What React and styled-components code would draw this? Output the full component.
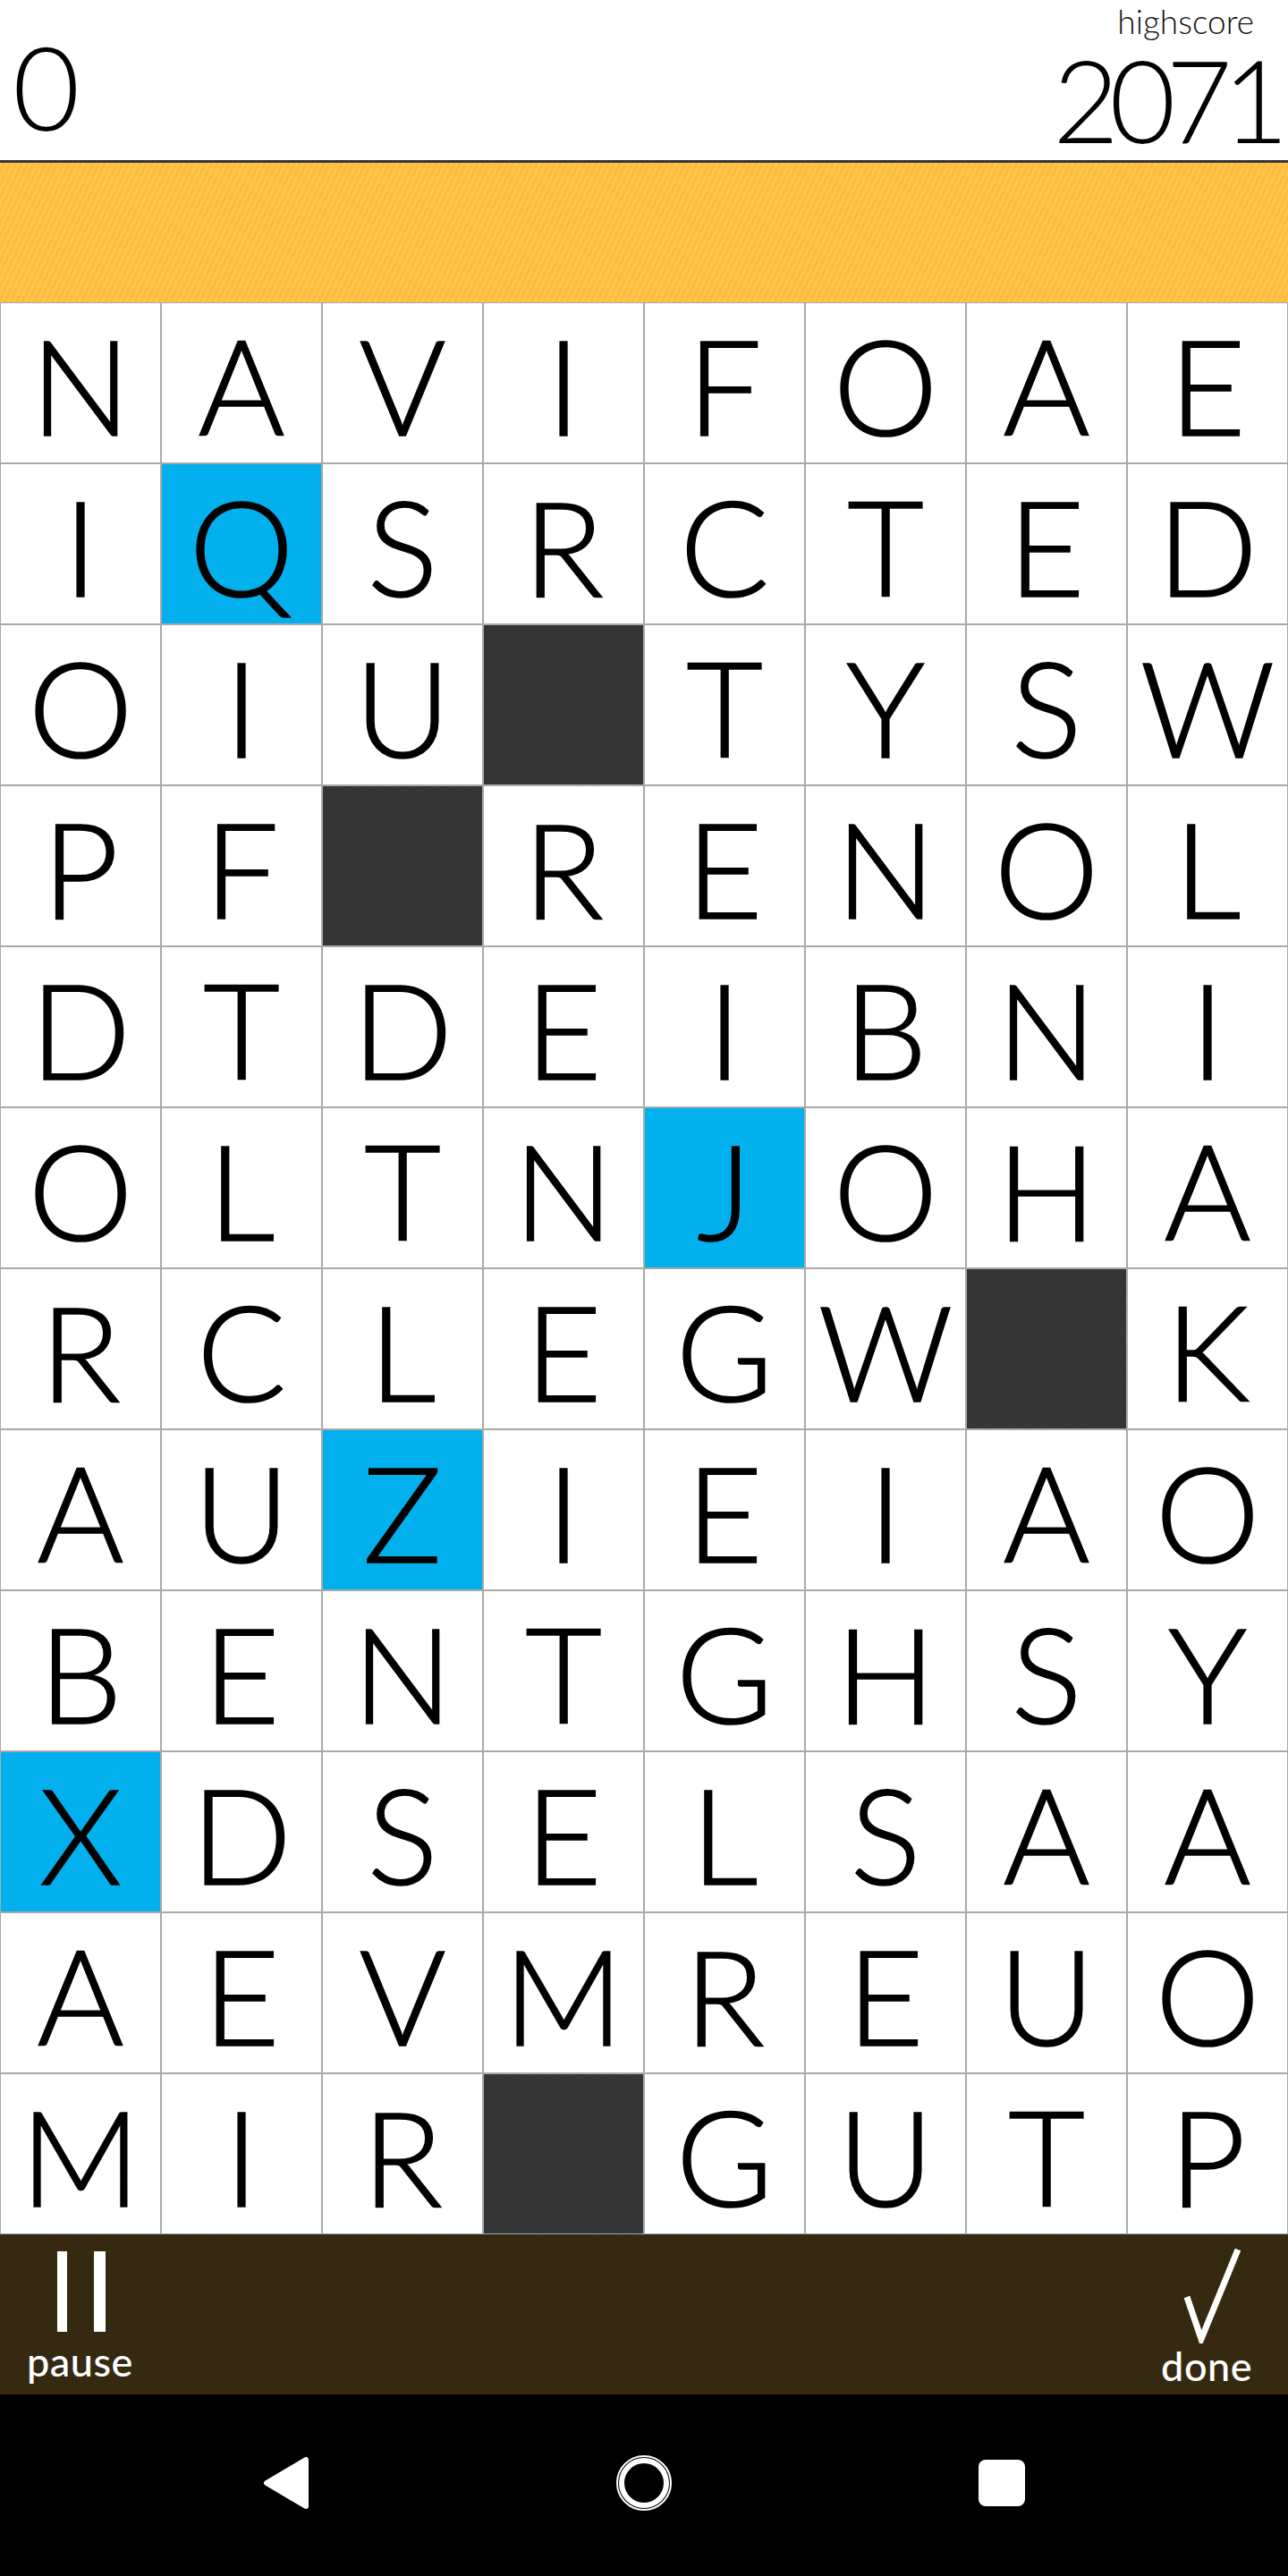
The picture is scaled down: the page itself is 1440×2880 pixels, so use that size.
import React from "react"
import styled, { createGlobalStyle } from "styled-components"

const GlobalStyle = createGlobalStyle`
  html, body {
    margin: 0;
    padding: 0;
    background: #000;
  }
  #root {
    width: 1440px;
  }
`

const BOARD = [
  "NAVIFOAE",
  "IQSRCTED",
  "OIU#TYSW",
  "PF#RENOL",
  "DTDEIBNI",
  "OLTNJOHA",
  "RCLEGW#K",
  "AUZIEIAO",
  "BENTGHSY",
  "XDSELSAA",
  "AEVMREUO",
  "MIR#GUTP",
]

// row-col keys for highlighted tiles
const SELECTED = ["1-1", "5-4", "7-2", "9-0"]

const Screen = styled.div`
  width: 1440px;
  height: 2880px;
  display: flex;
  flex-direction: column;
  background: #fff;
  font-family: Lato, "Open Sans", sans-serif;
`

const Header = styled.header`
  height: 179px;
  flex: none;
  display: flex;
  justify-content: space-between;
  border-bottom: 3px solid #353535;
  background: #fff;
`

const Score = styled.div`
  padding: 31px 0 0 14px;
  font-size: 130px;
  font-weight: 300;
  line-height: 130px;
  color: #000;
`

const HighWrap = styled.div`
  display: flex;
  flex-direction: column;
  align-items: flex-end;
  padding: 5px 10px 0 0;
`

const HighLabel = styled.div`
  font-size: 37px;
  font-weight: 300;
  line-height: 37px;
  color: #111;
  margin-right: 28px;
`

const HighValue = styled.div`
  margin-top: 4px;
  font-size: 128px;
  font-weight: 300;
  line-height: 130px;
  letter-spacing: -11px;
  color: #000;
`

const TimerBar = styled.div`
  height: 156px;
  flex: none;
  background-color: #fec03e;
  background-image: repeating-linear-gradient(
    -65deg,
    rgba(255, 255, 255, 0.07) 0 3px,
    rgba(0, 0, 0, 0.015) 3px 6px
  );
`

const Board = styled.div`
  display: grid;
  grid-template-columns: repeat(8, 180px);
  grid-auto-rows: 180px;
  flex: none;
`

const Tile = styled.div`
  box-sizing: border-box;
  height: 180px;
  border: 1px solid #a9a9a9;
  padding-top: 2px;
  text-align: center;
  font-size: 148px;
  font-weight: 300;
  line-height: 178px;
  color: #000;
  -webkit-text-stroke: 1.6px #000;
  background: ${(p) => (p.$blocked ? "#333333" : p.$selected ? "#02b0ee" : "#fff")};
  ${(p) =>
    p.$blocked &&
    `background-image: repeating-linear-gradient(45deg, rgba(255,255,255,0.025) 0 2px, transparent 2px 4px);`}
`

const ActionBar = styled.div`
  height: 179px;
  flex: none;
  display: flex;
  justify-content: space-between;
  align-items: flex-start;
  padding: 0 40px 0 30px;
  background-color: #372a12;
  background-image: repeating-linear-gradient(
    90deg,
    rgba(0, 0, 0, 0.05) 0 2px,
    transparent 2px 4px
  );
`

const Action = styled.button`
  display: flex;
  flex-direction: column;
  align-items: center;
  padding: 0;
  margin: 0;
  border: none;
  background: none;
  color: #fff;
  font-family: Lato, "Open Sans", sans-serif;
  cursor: pointer;
  svg {
    display: block;
    margin-top: ${(p) => p.$iconTop}px;
    margin-left: ${(p) => p.$iconShift || 0}px;
  }
`

const ActionLabel = styled.span`
  margin-top: ${(p) => p.$gap}px;
  font-size: 45px;
  font-weight: 500;
  line-height: 42px;
  letter-spacing: 0.5px;
`

const NavBar = styled.nav`
  flex: 1;
  display: flex;
  justify-content: center;
  align-items: center;
  gap: 258px;
  background: #000;
  padding-bottom: 6px;
`

const NavButton = styled.div`
  width: 142px;
  display: flex;
  justify-content: center;
  align-items: center;
`

function PauseIcon() {
  return (
    <svg width="54" height="90" viewBox="0 0 54 90">
      <rect x="0" y="0" width="11" height="90" fill="#fff" />
      <rect x="41" y="0" width="13" height="90" fill="#fff" />
    </svg>
  )
}

function CheckIcon() {
  return (
    <svg width="66" height="108" viewBox="0 0 66 108">
      <polyline
        points="4,56 20,103 61,3"
        fill="none"
        stroke="#fff"
        strokeWidth="7"
        strokeLinejoin="miter"
      />
    </svg>
  )
}

export default function App() {
  return (
    <Screen>
      <GlobalStyle />
      {/* Header */}
      <Header>
        <Score>0</Score>
        <HighWrap>
          <HighLabel>highscore</HighLabel>
          <HighValue>2071</HighValue>
        </HighWrap>
      </Header>
      {/* //Header */}
      <TimerBar />
      {/* Board */}
      <Board>
        {BOARD.map((row, r) =>
          row.split("").map((ch, c) => (
            <Tile
              key={r + "-" + c}
              $blocked={ch === "#"}
              $selected={SELECTED.includes(r + "-" + c)}
            >
              {ch === "#" ? "" : ch}
            </Tile>
          ))
        )}
      </Board>
      {/* //Board */}
      <ActionBar>
        <Action $iconTop={19} $iconShift={4}>
          <PauseIcon />
          <ActionLabel $gap={12}>pause</ActionLabel>
        </Action>
        <Action $iconTop={14} $iconShift={14}>
          <CheckIcon />
          <ActionLabel $gap={4}>done</ActionLabel>
        </Action>
      </ActionBar>
      <NavBar>
        <NavButton>
          <svg width="52" height="60" viewBox="0 0 52 60">
            <polygon
              points="4,30 48,4 48,56"
              fill="#fff"
              stroke="#fff"
              strokeWidth="6"
              strokeLinejoin="round"
            />
          </svg>
        </NavButton>
        <NavButton>
          <svg width="64" height="64" viewBox="0 0 64 64">
            <circle cx="32" cy="32" r="30" fill="none" stroke="#fff" strokeWidth="2" />
            <circle cx="32" cy="32" r="25" fill="none" stroke="#fff" strokeWidth="6" />
          </svg>
        </NavButton>
        <NavButton>
          <svg width="54" height="54" viewBox="0 0 54 54">
            <rect x="1" y="1" width="52" height="52" rx="8" fill="#fff" />
          </svg>
        </NavButton>
      </NavBar>
    </Screen>
  )
}
